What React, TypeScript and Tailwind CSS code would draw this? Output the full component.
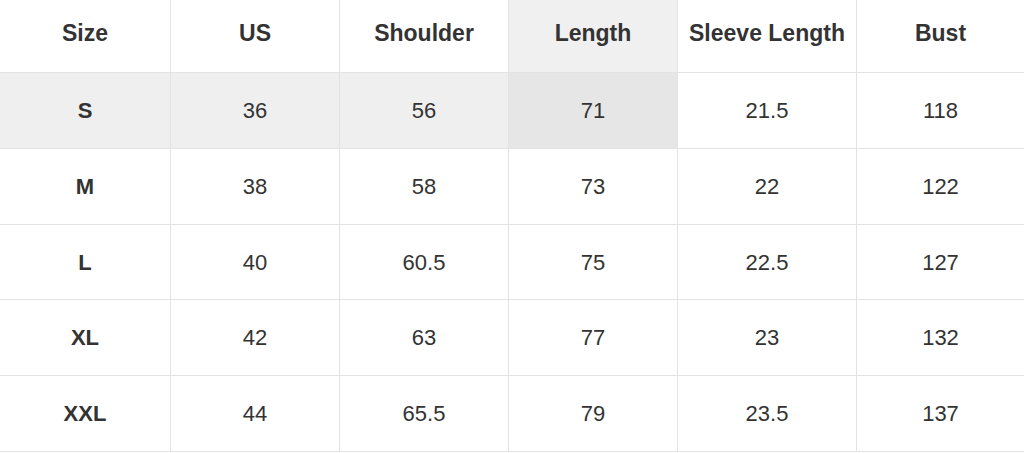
const headers = ["Size", "US", "Shoulder", "Length", "Sleeve Length", "Bust"];

const rows = [
  ["S", "36", "56", "71", "21.5", "118"],
  ["M", "38", "58", "73", "22", "122"],
  ["L", "40", "60.5", "75", "22.5", "127"],
  ["XL", "42", "63", "77", "23", "132"],
  ["XXL", "44", "65.5", "79", "23.5", "137"],
];

const rowHeights = ["h-[76px]", "h-[76px]", "h-[75px]", "h-[76px]", "h-[76px]"];

export default function App() {
  return (
    <div className="w-[1024px] h-[454px] bg-white overflow-hidden text-[#333]" style={{ fontFamily: '"Liberation Sans", Arial, sans-serif' }}>
      <div className="grid grid-cols-[171px_169px_169px_169px_179px_167px]">
        {headers.map((h, i) => (
          <div
            key={h}
            className={`h-[73px] flex items-center justify-center pb-[6px] border-b border-[#e3e3e3] text-[23px] font-bold ${
              i < 5 ? "border-r" : ""
            } ${i === 3 ? "bg-[#f0f0f0]" : "bg-white"}`}
          >
            {h}
          </div>
        ))}
        {rows.map((row, r) =>
          row.map((cell, c) => {
            let bg = "bg-white";
            if (r === 0 && c < 3) bg = "bg-[#efefef]";
            if (r === 0 && c === 3) bg = "bg-[#e6e6e6]";
            return (
              <div
                key={`${r}-${c}`}
                className={`${rowHeights[r]} flex items-center justify-center border-b border-[#e3e3e3] text-[22px] ${
                  c < 5 ? "border-r" : ""
                } ${c === 0 ? "font-bold" : ""} ${bg}`}
              >
                {cell}
              </div>
            );
          })
        )}
      </div>
    </div>
  );
}
